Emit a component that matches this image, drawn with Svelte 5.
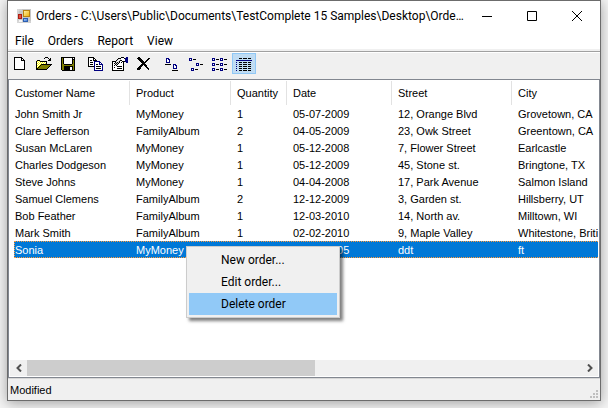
<script>
  const palette = {
    k: '#000000', w: '#ffffff', y: '#ffff00', c: '#fff27a', o: '#808000',
    n: '#000080', g: '#909090', s: '#c8c8c8'
  };

  const icons = {
    newFile: [
      '', '..kkkkkkkk', '..kwwwwwwkk', '..kwwwwwwkwk', '..kwwwwwwkkkk', '..kwwwwwwwwwk',
      '..kwwwwwwwwwk', '..kwwwwwwwwwk', '..kwwwwwwwwwk', '..kwwwwwwwwwk', '..kwwwwwwwwwk',
      '..kwwwwwwwwwk', '..kwwwwwwwwwk', '..kkkkkkkkkkk'],
    open: [
      '', '.........kkk', '........k...k.k', '.............kk', '.kkk........kkk', 'kywykkkkkkk',
      'kwywywywywk', 'kywywywywyk', 'kwywykkkkkkkkkkk', 'kywykoooooooook', 'kwykoooooooook',
      'kykoooooooook', 'kkoooooooook', 'kkkkkkkkkkk'],
    save: [
      '', '.kkkkkkkkkkkkkk', '.kokwwwwwwwwkwk', '.kokwwwwwwwwkkk', '.kokwwwwwwwwkok',
      '.kokwwwwwwwwkok', '.kokwwwwwwwwkok', '.kokwwwwwwwwkok', '.kookkkkkkkkook',
      '.kooooooooooook', '.kookkkkkkkkkok', '.kookkkkkkwwkok', '.kookkkkkkwwkok',
      '.kookkkkkkwwkok', '..kkkkkkkkkkkkk'],
    copy: [
      '', 'kkkkkk', 'kwwwwkk', 'kwwwwkwk', 'kwkkwkkkk', 'kwwwwwnnnnnn', 'kwkkkwnwwwwnn',
      'kwwwwwnwwwwnwn', 'kwkkkwnwkkwnnnn', 'kwwwwwnwwwwwwwn', 'kkkkkknwkkkkkwn',
      '......nwwwwwwwn', '......nwkkkkkwn', '......nwwwwwwwn', '......nnnnnnnnn'],
    props: [
      '', '.........kkk..nn', '......kkkwwwknnn', '.....kswswwwwnnn', '....kswskkwwwnnn',
      'kkkkswskwwkkknnn', 'kwwkskskwkwk..nn', 'kwkskskwwwwk', 'kwwkskwwwwwk', 'kwkwkwwwwwwk',
      'kwwwwkkkkkwk', 'kwkwwwwwwwwk', 'kwwwwkkkkkwk', 'kwwwwwwwwwwk', 'kkkkkkkkkkkk'],
    remove: [
      '', '..kk', '.kkkk.......kk', '..kkkk.....kk', '...kkkk...kk', '....kkkk.kk',
      '.....kkkkk', '......kkk', '.....kkkkk', '....kkk.kkk', '...kkk...kk', '..kkk.....kk',
      '.kkkk......kk', '.kkk........k'],
    large: [
      '', '', '..nnn', '..nwnn', '..nwwn', '..nwwn', '..nnnn', '', '.kkkkkk..nnn',
      '.........nwnn', '.........nwwn', '.........nwwn', '.........nnnn', '', '........kkkkkk'],
    small: [
      '', '', '.nnn', '.nwn.kkk', '.nnn', '', '', '........nnn', '........nwn.kkk',
      '........nnn', '', '', '...nnn', '...nwn.kkk', '...nnn'],
    list: [
      '', '', 'nnn.....nnn', 'nwn.kkk.nwn.kkk', 'nnn.....nnn', '', '', 'nnn.....nnn',
      'nwn.kkk.nwn.kkk', 'nnn.....nnn', '', '', 'nnn.....nnn', 'nwn.kkk.nwn.kkk', 'nnn.....nnn'],
    details: [
      '', '', '...kkk.kkkk.kkk', '', 'nnnnnnnnnnnnnnnn', '', 'n..kkk.kkkk.kkk', '',
      'n..kkk.kkkk.kkk', '', 'n..kkk.kkkk.kkk', '', 'n..kkk.kkkk.kkk', '', 'n..kkk.kkkk.kkk']
  };

  const toolGroups = [
    [['newFile', 'New'], ['open', 'Open'], ['save', 'Save']],
    [['copy', 'New order'], ['props', 'Edit order'], ['remove', 'Delete order']],
    [['large', 'Large icons'], ['small', 'Small icons'], ['list', 'List'], ['details', 'Details']]
  ];

  const columns = ['Customer Name', 'Product', 'Quantity', 'Date', 'Street', 'City'];
  const orders = [
    ['John Smith Jr', 'MyMoney', '1', '05-07-2009', '12, Orange Blvd', 'Grovetown, CA'],
    ['Clare Jefferson', 'FamilyAlbum', '2', '04-05-2009', '23, Owk Street', 'Greentown, CA'],
    ['Susan McLaren', 'MyMoney', '1', '05-12-2008', '7, Flower Street', 'Earlcastle'],
    ['Charles Dodgeson', 'MyMoney', '1', '05-12-2009', '45, Stone st.', 'Bringtone, TX'],
    ['Steve Johns', 'MyMoney', '1', '04-04-2008', '17, Park Avenue', 'Salmon Island'],
    ['Samuel Clemens', 'FamilyAlbum', '2', '12-12-2009', '3, Garden st.', 'Hillsberry, UT'],
    ['Bob Feather', 'FamilyAlbum', '1', '12-03-2010', '14, North av.', 'Milltown, WI'],
    ['Mark Smith', 'FamilyAlbum', '1', '02-02-2010', '9, Maple Valley', 'Whitestone, British'],
    ['Sonia', 'MyMoney', '1', '02-04-2005', 'ddt', 'ft']
  ];
  let selected = $state(8);
  let view = $state('details');
</script>

{#snippet pixels(rows)}
  <svg class="pixels" width="16" height="16" viewBox="0 0 16 16" shape-rendering="crispEdges" aria-hidden="true">
    {#each rows as row, y}
      {#each row.split('') as p, x}
        {#if p !== '.'}<rect {x} {y} width="1" height="1" fill={palette[p]} />{/if}
      {/each}
    {/each}
  </svg>
{/snippet}

<div class="desktop">
  <main class="window">
    <header class="titlebar">
      <svg class="logo" width="14" height="14" viewBox="0 0 14 14" aria-hidden="true">
        <defs>
          <linearGradient id="gold" x2="1" y2="1"><stop stop-color="#fff3b0" /><stop offset="1" stop-color="#eeb000" /></linearGradient>
          <linearGradient id="blue" x2="1" y2="1"><stop stop-color="#b4d4ff" /><stop offset="1" stop-color="#2f6fd6" /></linearGradient>
        </defs>
        <rect width="14" height="14" fill="#c6c6c6" />
        <path d="M0 1H5M1 0V14M0 13H14" stroke="#dedede" />
        <rect x="6.500" y="1.500" width="6" height="6" fill="url(#gold)" stroke="#b98310" />
        <rect x="1.500" y="5.500" width="3" height="4" fill="#e2523f" stroke="#ad1c12" />
        <rect x="6.500" y="9.500" width="4" height="3" fill="url(#blue)" stroke="#2c5faf" />
        <rect x="2" y="11" width="3" height="2" fill="#f5f5f5" />
      </svg>
      <h1>Orders - C:\Users\Public\Documents\TestComplete 15 Samples\Desktop\Orde...</h1>
      <div class="caption">
        <button aria-label="Minimize"><svg width="10" height="10" viewBox="0 0 10 10"><path d="M0 5.500H10" /></svg></button>
        <button aria-label="Maximize"><svg width="10" height="10" viewBox="0 0 10 10"><path d="M.5 .5H9.500V9.500H.5Z" /></svg></button>
        <button aria-label="Close"><svg width="10" height="10" viewBox="0 0 10 10"><path d="M0 0L10 10M10 0L0 10" /></svg></button>
      </div>
    </header>

    <nav class="menubar">
      {#each ['File', 'Orders', 'Report', 'View'] as item}<button>{item}</button>{/each}
    </nav>

    <div class="toolbar" role="toolbar" aria-label="Orders">
      {#each toolGroups as group}
        <div class="group">
          {#each group as [id, label]}
            <button class:checked={view === id} aria-label={label}
              onclick={() => { if (group === toolGroups[2]) view = id; }}>{@render pixels(icons[id])}</button>
          {/each}
        </div>
      {/each}
    </div>

    <section class="list">
      <div class="scroller">
        <table>
          <colgroup><col class="name" /><col class="product" /><col class="qty" /><col class="date" /><col class="street" /><col class="city" /></colgroup>
          <thead><tr>{#each columns as c}<th scope="col">{c}</th>{/each}</tr></thead>
          <tbody>
            {#each orders as order, i}
              <tr class:selected={selected === i} onclick={() => (selected = i)}>
                {#each order as cell}<td>{cell}</td>{/each}
              </tr>
            {/each}
          </tbody>
        </table>
      </div>
      <div class="scrollbar">
        <button aria-label="Scroll left"><svg width="6" height="8" viewBox="0 0 6 8"><path d="M5 0.500L1.500 4L5 7.500" /></svg></button>
        <div class="track"><div class="thumb"></div></div>
        <button aria-label="Scroll right"><svg width="6" height="8" viewBox="0 0 6 8"><path d="M1 0.500L4.500 4L1 7.500" /></svg></button>
      </div>
    </section>

    <footer class="status">
      <span>Modified</span>
      <svg class="grip" width="8" height="8" viewBox="0 0 8 8" aria-hidden="true">
        <path d="M6 0h2v2h-2zM3 3h2v2h-2zM6 3h2v2h-2zM0 6h2v2h-2zM3 6h2v2h-2zM6 6h2v2h-2z" fill="#bfbfbf" />
      </svg>
    </footer>

    <div class="context" role="menu">
      <button role="menuitem">New order...</button>
      <button role="menuitem">Edit order...</button>
      <button role="menuitem" class="active">Delete order</button>
    </div>
  </main>
</div>

<style>
  .desktop {
    box-sizing: border-box;
    display: flex;
    min-height: 100vh;
    padding: 0 7px 7px;
    overflow: hidden;
    background: #f4f4f4;
    color: #000;
    font: 12px/16px Roboto, "Open Sans", sans-serif;
  }
  button {
    margin: 0;
    padding: 0;
    border: 0;
    background: none;
    color: inherit;
    font: inherit;
  }
  .window {
    position: relative;
    box-sizing: border-box;
    display: flex;
    flex: 1;
    flex-direction: column;
    min-width: 0;
    border: 1px solid #6c6c6c;
    background: #fff;
    box-shadow: 0 2px 12px rgba(0, 0, 0, 0.35);
  }
  .titlebar {
    display: flex;
    align-items: center;
    height: 30px;
    padding: 0 1px 0 9px;
  }
  .logo { flex: none; }
  h1 {
    flex: 1;
    min-width: 0;
    margin: 0 0 0 5px;
    overflow: hidden;
    font-size: 12px;
    font-weight: 400;
    text-overflow: ellipsis;
    white-space: nowrap;
  }
  .caption { display: flex; }
  .caption button {
    display: grid;
    place-items: center;
    width: 45px;
    height: 30px;
  }
  .caption path { fill: none; stroke: #000; }
  .menubar {
    display: flex;
    gap: 14px;
    padding: 2px 7px 0;
    border-bottom: 2px solid #f0f0f0;
  }
  .toolbar {
    display: flex;
    gap: 4px;
    padding: 1px 0 5px;
    border-top: 1px solid #a0a0a0;
    background: #f0f0f0;
    box-shadow: inset 0 1px #fff;
  }
  .group { display: flex; }
  .group button {
    box-sizing: border-box;
    display: grid;
    place-items: center;
    width: 24px;
    height: 21px;
    border: 1px solid transparent;
  }
  .group .checked {
    border-color: #90c8f6;
    background: #c0dcf3;
  }
  .pixels { display: block; }
  .list {
    display: flex;
    flex: 1;
    flex-direction: column;
    border: 1px solid #828790;
    padding: 1px;
    font: 11px/16px "Liberation Sans", Arial, sans-serif;
  }
  .scroller {
    flex: 1;
    margin-left: 4px;
    overflow: hidden;
  }
  table {
    width: 1120px;
    border-collapse: collapse;
    table-layout: fixed;
  }
  .name { width: 116px; }
  .product { width: 101px; }
  .qty { width: 56px; }
  .date { width: 105px; }
  .street { width: 120px; }
  th, td {
    padding: 0 0 0 6px;
    font-weight: 400;
    text-align: left;
    white-space: nowrap;
  }
  td { padding-top: 1px; }
  th {
    height: 24px;
    background: linear-gradient(#e2e2e2, #e2e2e2) right / 1px 100% no-repeat;
  }
  th:first-child, td:first-child { padding-left: 1px; }
  tr.selected {
    background: #0078d7;
    color: #fff;
    outline: 1px dotted #ff9a3c;
    outline-offset: -1px;
  }
  .scrollbar {
    display: flex;
    height: 16px;
    background: #f0f0f0;
  }
  .scrollbar button {
    display: grid;
    place-items: center;
    width: 17px;
  }
  .scrollbar path { fill: none; stroke: #505050; stroke-width: 2; }
  .track { display: flex; flex: 1; }
  .thumb { width: 52%; background: #cdcdcd; }
  .status {
    display: flex;
    align-items: center;
    justify-content: space-between;
    height: 21px;
    padding: 0 2px;
    border-top: 1px solid #d7d7d7;
    background: #f0f0f0;
    font: 11px/16px "Liberation Sans", Arial, sans-serif;
  }
  .grip { align-self: flex-end; margin-bottom: 2px; }
  .context {
    position: absolute;
    top: 245px;
    left: 178px;
    box-sizing: border-box;
    display: flex;
    flex-direction: column;
    width: 154px;
    padding: 2px;
    border: 1px solid #ccc;
    background: #f0f0f0;
    box-shadow: 3px 3px 3px rgba(0, 0, 0, 0.5);
  }
  .context button {
    height: 22px;
    padding-left: 32px;
    text-align: left;
  }
  .context .active { background: #91c9f7; }
</style>
